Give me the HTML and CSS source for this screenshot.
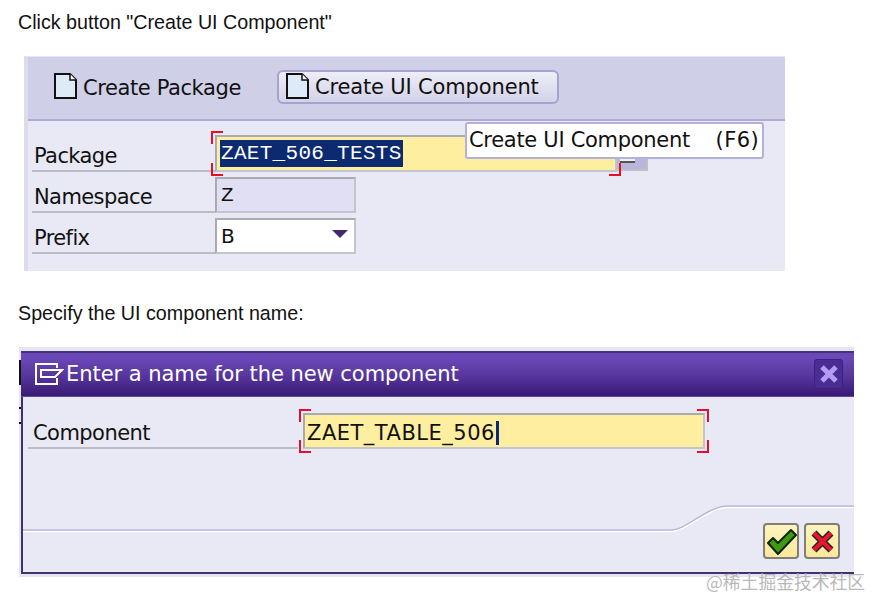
FILE: index.html
```html
<!DOCTYPE html>
<html lang="en">
<head>
  <meta charset="UTF-8">
  <meta name="viewport" content="width=device-width, initial-scale=1.0">
  <title>Create UI Component</title>
  <link rel="stylesheet" href="styles.css">
</head>
<body>
  <p class="step step-first">Click button "Create UI Component"</p>

  <div class="panel">
    <div class="toolbar">
      <span class="tool">
        <svg class="doc-icon" width="23" height="26" viewBox="0 0 23 26"><path d="M1 1H16L22 7V25H1Z" fill="#dcebf7" stroke="#111" stroke-width="2"/><path d="M16 1V7H22" fill="#fff" stroke="#111" stroke-width="1.5"/></svg>
        Create Package
      </span>
      <span class="tool tool-button">
        <svg class="doc-icon" width="23" height="26" viewBox="0 0 23 26"><path d="M1 1H16L22 7V25H1Z" fill="#dcebf7" stroke="#111" stroke-width="2"/><path d="M16 1V7H22" fill="#fff" stroke="#111" stroke-width="1.5"/></svg>
        Create UI Component
      </span>
    </div>

    <div class="form">
      <div class="row row-package">
        <span class="label">Package</span>
        <span class="field field-focus field-wide">
          <span class="selected">ZAET_506_TESTS</span>
          <i class="corner tl"></i><i class="corner tr"></i><i class="corner bl"></i><i class="corner br"></i>
        </span>
        <span class="help-button"><i></i></span>
      </div>
      <div class="row">
        <span class="label">Namespace</span>
        <span class="field field-readonly">Z</span>
      </div>
      <div class="row">
        <span class="label">Prefix</span>
        <span class="field field-select">B<i class="arrow"></i></span>
      </div>
    </div>

    <div class="tooltip"><span>Create UI Component</span><span class="shortcut">(F6)</span></div>
  </div>

  <p class="step step-second">Specify the UI component name:</p>

  <div class="dialog-frame">
    <i class="speck speck-a"></i><i class="speck speck-b"></i><i class="speck speck-c"></i>
    <div class="dialog">
      <div class="titlebar">
        <svg class="title-icon" width="29" height="22" viewBox="0 0 29 22"><path d="M22 5V1H1V21H22V15" fill="none" stroke="#fff" stroke-width="2"/><path d="M6 7H27L20 14H6Z" fill="none" stroke="#fff" stroke-width="2"/></svg>
        <span class="title-text">Enter a name for the new component</span>
        <span class="close-button">
          <svg width="20" height="20" viewBox="0 0 20 20"><path d="M3 3L17 17M17 3L3 17" stroke="#b49cf5" stroke-width="5"/></svg>
        </span>
      </div>
      <div class="dialog-body">
        <span class="label label-dialog">Component</span>
        <span class="field field-focus field-name">
          ZAET_TABLE_506<i class="caret"></i>
          <i class="corner tl"></i><i class="corner tr"></i><i class="corner bl"></i><i class="corner br"></i>
        </span>
      </div>
      <div class="dialog-footer">
        <svg class="footer-line" width="831" height="40" viewBox="0 0 831 40"><path d="M0 27H648C664 27 684 3 705 3H831" fill="none" stroke="#fff" stroke-width="1.5" transform="translate(0 1.5)"/><path d="M0 27H648C664 27 684 3 705 3H831" fill="none" stroke="#bdb8da" stroke-width="1.5"/></svg>
        <span class="action">
          <svg width="31" height="29" viewBox="0 0 31 29"><path d="M2 16L7 11L12 16L25 3L30 8L12 27Z" fill="#3f9a12" stroke="#10240a" stroke-width="2" stroke-linejoin="round"/></svg>
        </span>
        <span class="action">
          <svg width="27" height="27" viewBox="0 0 27 27"><path d="M5 5L22 22M22 5L5 22" stroke="#222" stroke-width="7"/><path d="M5 5L22 22M22 5L5 22" stroke="#e8152c" stroke-width="4"/></svg>
        </span>
      </div>
    </div>
  </div>

  <span class="watermark">@稀土掘金技术社区</span>
</body>
</html>
```

FILE: styles.css
```css
body {
  margin: 0;
  height: 597px;
  position: relative;
  overflow: hidden;
  background: #fff;
  font-family: "Liberation Sans", Arial, sans-serif;
  color: #111;
}

.step {
  margin: 0 0 0 18px;
  font-size: 19.7px;
  line-height: 22px;
}

.step-first {
  padding-top: 11px;
  margin-bottom: 23px;
}

.step-second {
  margin-top: 31px;
  margin-bottom: 23px;
}

/* first screenshot */
.panel {
  position: relative;
  width: 757px;
  height: 214px;
  margin-left: 24px;
  background: #e9e9f5;
  border-left: 4px solid #dcdcec;
  border-top: 1px solid #e6e6f2;
  font-family: "DejaVu Sans", sans-serif;
  font-size: 21px;
}

.toolbar {
  display: flex;
  align-items: center;
  height: 62px;
  padding-left: 26px;
  background: #cfcfe8;
  border-bottom: 2px solid #aeabd2;
  box-sizing: content-box;
}

.tool {
  display: flex;
  align-items: center;
  gap: 6px;
  white-space: nowrap;
  letter-spacing: -0.4px;
}

.tool-button {
  box-sizing: border-box;
  width: 282px;
  height: 34px;
  margin-left: 36px;
  margin-bottom: 2px;
  padding-left: 7px;
  background: linear-gradient(#eeeef8, #d3d2e9);
  border: 2px solid #a7a3d0;
  border-radius: 6px;
  letter-spacing: -0.15px;
}

.doc-icon {
  flex: none;
  margin-bottom: 5px;
}

.tool-button .doc-icon {
  margin-bottom: 3px;
}

.form {
  padding: 10px 0 0 4px;
}

.row {
  display: flex;
  align-items: flex-end;
  height: 41px;
}

.label {
  box-sizing: border-box;
  width: 183px;
  padding-left: 2px;
  height: 30px;
  line-height: 28px;
  border-bottom: 2px solid #bcbcc6;
  letter-spacing: -0.6px;
}

.field {
  position: relative;
  box-sizing: border-box;
  display: flex;
  align-items: center;
  height: 36px;
  width: 141px;
  padding-left: 4px;
  border: 2px solid #aaa9b4;
  border-right-color: #c4c4cc;
  border-bottom-color: #c4c4cc;
  font-family: "Liberation Mono", monospace;
  font-size: 21px;
}

.field-focus {
  background: #fdeea0;
}

.field-wide {
  width: 402px;
  height: 37px;
  padding-left: 3px;
}

.field-readonly {
  background: #e0dff3;
}

.field-select {
  justify-content: space-between;
  padding-right: 6px;
  background: #fff;
  font-family: "DejaVu Sans", sans-serif;
  font-size: 20px;
}

.selected {
  padding: 0 1px;
  line-height: 27px;
  background: #0b2a6f;
  color: #fff;
  letter-spacing: 0.3px;
}

.arrow {
  width: 0;
  height: 0;
  margin-top: -5px;
  border: 8px solid transparent;
  border-bottom: 0;
  border-top: 8px solid #43286f;
}

.help-button {
  box-sizing: border-box;
  width: 31px;
  height: 21px;
  padding: 0 0 8px 3px;
  margin-bottom: 1px;
  background: #b9b6de;
  border-right: 2px solid #c0bfc8;
  border-bottom: 2px solid #c0bfc8;
}

.help-button i {
  display: block;
  width: 15px;
  height: 100%;
  background: #f0f0f0;
  border-bottom: 2px solid #555;
}

.corner {
  position: absolute;
  width: 10px;
  height: 11px;
  border: 0 solid #e3102a;
}

.tl { left: -6px; top: -6px; border-width: 2px 0 0 2px; }
.tr { right: -6px; top: -6px; border-width: 2px 2px 0 0; }
.bl { left: -6px; bottom: -6px; border-width: 0 0 2px 2px; }
.br { right: -6px; bottom: -6px; border-width: 0 2px 2px 0; }

.tooltip {
  position: absolute;
  left: 437px;
  top: 65px;
  box-sizing: border-box;
  display: flex;
  justify-content: space-between;
  width: 299px;
  height: 37px;
  padding: 0 3px 0 2px;
  line-height: 33px;
  background: #fff;
  border: 2px solid #b4b0dc;
  border-radius: 3px;
  letter-spacing: -0.3px;
}

.shortcut {
  letter-spacing: 0.4px;
}

/* second screenshot */
.dialog-frame {
  position: relative;
  box-sizing: border-box;
  width: 835px;
  height: 230px;
  margin-left: 19px;
  padding: 4px 0 3px 2px;
  background: #e6e6f2;
}

.speck {
  position: absolute;
  left: 0;
  width: 2px;
  background: #111;
}

.speck-a { top: 13px; height: 25px; }
.speck-b { top: 60px; height: 2px; }
.speck-c { top: 75px; height: 2px; }

.dialog {
  box-sizing: border-box;
  height: 223px;
  background: #e9e9f5;
  border-left: 2px solid #43306f;
  border-bottom: 2px solid #43306f;
  font-family: "DejaVu Sans", sans-serif;
  font-size: 21px;
}

.titlebar {
  display: flex;
  align-items: center;
  height: 46px;
  margin-left: -2px;
  padding: 0 11px 2px 14px;
  color: #fff;
  background: linear-gradient(#6b48b8 10%, #59389f 50%, #381a74);
  border-top: 2px solid #47327a;
  border-bottom: 1px solid #5f4b96;
  box-sizing: border-box;
}

.title-icon {
  flex: none;
  margin-right: 2px;
}

.title-text {
  flex: 1;
  letter-spacing: -0.05px;
  white-space: nowrap;
}

.close-button {
  display: flex;
  align-items: center;
  justify-content: center;
  width: 29px;
  height: 30px;
  background: #4a2d92;
  border: 1px solid #3b2180;
  box-sizing: border-box;
  border-radius: 3px;
}

.dialog-body {
  display: flex;
  align-items: flex-end;
  height: 52px;
  padding-left: 5px;
}

.label-dialog {
  width: 270px;
  padding-left: 5px;
  letter-spacing: -0.55px;
}

.field-name {
  width: 402px;
  height: 36px;
  margin-left: 5px;
  padding: 3px 0 0 2px;
  font-family: "DejaVu Sans", sans-serif;
  font-size: 21px;
  letter-spacing: 0.5px;
  white-space: nowrap;
}

.caret {
  width: 3px;
  height: 24px;
  margin-left: 1px;
  background: #0b2a6f;
}

.dialog-footer {
  position: relative;
  display: flex;
  justify-content: flex-end;
  gap: 5px;
  height: 123px;
  padding: 74px 14px 0 0;
  box-sizing: border-box;
}

.footer-line {
  position: absolute;
  left: 0;
  top: 54px;
}

.action {
  position: relative;
  display: flex;
  align-items: center;
  justify-content: center;
  box-sizing: border-box;
  width: 36px;
  height: 36px;
  background: linear-gradient(#fdf3bd, #fbe89a);
  border: 2px solid #7f7f7a;
  border-radius: 4px;
}

.watermark {
  position: absolute;
  left: 706px;
  top: 570px;
  color: #b9b9b9;
  font-family: "Noto Sans CJK SC", sans-serif;
  font-size: 17.8px;
  line-height: 22px;
  white-space: nowrap;
}
```
